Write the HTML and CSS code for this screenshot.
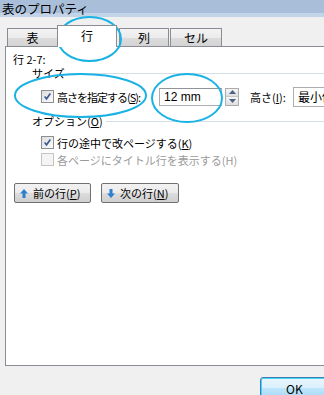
FILE: index.html
```html
<!DOCTYPE html>
<html lang="ja">
<head>
    <meta charset="UTF-8">
    <title>表のプロパティ</title>
    <link rel="stylesheet" href="styles.css">
</head>
<body>
    <div class="titlebar">表のプロパティ</div>

    <div class="tabs">
        <div class="tab tab-table">表</div>
        <div class="tab tab-row selected">行</div>
        <div class="tab tab-col">列</div>
        <div class="tab tab-cell">セル</div>
    </div>

    <div class="panel">
        <div class="range">行 2-7:</div>

        <div class="group"><span>サイズ</span></div>
        <div class="size-row">
            <div class="check">
                <span class="box checked">
                    <svg viewBox="0 0 11 11"><path d="M2 5.5 L4.3 8.3 L9 1.8" fill="none" stroke="#3d5a94" stroke-width="2"/></svg>
                </span>
                <span>高さを指定する(<u>S</u>):</span>
            </div>
            <div class="field">12 mm</div>
            <div class="spin">
                <span class="spin-btn"><svg viewBox="0 0 7 4"><path d="M0 4 L3.5 0 L7 4 Z" fill="#4d6185"/></svg></span>
                <span class="spin-btn"><svg viewBox="0 0 7 4"><path d="M0 0 L3.5 4 L7 0 Z" fill="#4d6185"/></svg></span>
            </div>
            <span class="lbl">高さ(<u>I</u>):</span>
            <div class="select">最小値</div>
        </div>

        <div class="group"><span>オプション(<u>O</u>)</span></div>
        <div class="check opt">
            <span class="box checked">
                <svg viewBox="0 0 11 11"><path d="M2 5.5 L4.3 8.3 L9 1.8" fill="none" stroke="#3d5a94" stroke-width="2"/></svg>
            </span>
            <span>行の途中で改ページする(<u>K</u>)</span>
        </div>
        <div class="check opt disabled">
            <span class="box"></span>
            <span>各ページにタイトル行を表示する(H)</span>
        </div>

        <div class="nav">
            <button class="btn">
                <svg viewBox="0 0 8 9"><path d="M4 0 L8 4.5 L5.5 4.5 L5.5 9 L2.5 9 L2.5 4.5 L0 4.5 Z" fill="#2f7fd0"/></svg>
                <span>前の行(<u>P</u>)</span>
            </button>
            <button class="btn">
                <svg viewBox="0 0 8 9"><path d="M4 9 L8 4.5 L5.5 4.5 L5.5 0 L2.5 0 L2.5 4.5 L0 4.5 Z" fill="#2f7fd0"/></svg>
                <span>次の行(<u>N</u>)</span>
            </button>
        </div>
    </div>

    <div class="footer">
        <button class="ok">OK</button>
    </div>

    <!-- hand-drawn highlight marks over the dialog -->
    <svg class="marks" viewBox="0 0 324 395">
        <ellipse cx="89.5" cy="39" rx="31.5" ry="22"/>
        <ellipse cx="80.5" cy="95.5" rx="65.5" ry="21.5"/>
        <ellipse cx="187" cy="98" rx="35" ry="24"/>
    </svg>
</body>
</html>
```

FILE: styles.css
```css
html, body {
    margin: 0;
    padding: 0;
}

body {
    position: relative;
    width: 324px;
    height: 395px;
    overflow: hidden;
    background: #f0f0f0;
    font-family: "Noto Sans CJK JP", "Noto Sans", sans-serif;
    font-size: 11px;
    color: #000;
}

u {
    text-decoration: underline;
    text-underline-offset: 1px;
}

.titlebar {
    height: 17px;
    padding-left: 2px;
    background: linear-gradient(#a9bfd9 0, #a9bfd9 13px, #c3d4e8 13px, #c3d4e8 17px);
    font-size: 12.5px;
    line-height: 17px;
}

/* tabs */
.tabs {
    display: flex;
    align-items: flex-end;
    height: 29px;
    padding-left: 7px;
    box-sizing: border-box;
}

.tab {
    height: 18px;
    box-sizing: border-box;
    border: 1px solid #898c95;
    border-bottom: none;
    background: linear-gradient(#f3f3f3 0, #ebebeb 50%, #dcdcdc 51%, #d4d4d4 100%);
    text-align: center;
    font-size: 12px;
    line-height: 17px;
}

.tab-table { width: 51px; }
.tab-col { width: 50px; margin-left: 2px; }
.tab-cell { width: 52px; margin-left: 1px; }

.tab.selected {
    width: 60px;
    height: 22px;
    margin-left: -1px;
    margin-bottom: -1px;
    position: relative;
    z-index: 1;
    background: #fff;
    line-height: 20px;
}

/* panel */
.panel {
    margin-left: 5px;
    width: 340px;
    height: 320px;
    box-sizing: border-box;
    border: 1px solid #898c95;
    background: #fff;
    padding: 5px 0 0 7px;
}

.range {
    line-height: 14px;
}

.group {
    display: flex;
    align-items: center;
    margin-left: 19px;
    line-height: 14px;
}

.group::after {
    content: "";
    flex: 1;
    height: 1px;
    margin-left: 3px;
    margin-top: 1px;
    background: #d5dfe5;
}

.size-row {
    display: flex;
    align-items: center;
    height: 19px;
    margin: 7px 0 8px 28px;
}

.check {
    display: flex;
    align-items: center;
    gap: 3px;
    white-space: nowrap;
}

.size-row .check {
    flex: none;
    width: 118px;
    letter-spacing: -1px;
}

.check.opt {
    height: 17px;
    margin-left: 28px;
}

.group + .check.opt {
    margin-top: 6px;
}

.check.disabled {
    color: #9a9a9a;
}

.box {
    width: 13px;
    height: 13px;
    flex: none;
    box-sizing: border-box;
    border: 1px solid #8e8f8f;
    background: linear-gradient(135deg, #dedede, #fbfbfb);
    display: flex;
    align-items: center;
    justify-content: center;
}

.box svg {
    width: 9px;
    height: 9px;
}

.disabled .box {
    border-color: #c4c4c4;
    background: #f4f4f4;
}

.field {
    width: 63px;
    height: 18px;
    flex: none;
    box-sizing: border-box;
    border: 1px solid #abadb3;
    border-top-color: #8f939a;
    padding-left: 4px;
    font-family: "Liberation Sans", sans-serif;
    font-size: 12px;
    line-height: 16px;
}

.spin {
    display: flex;
    flex-direction: column;
    flex: none;
    width: 14px;
    height: 18px;
    margin-left: 3px;
    box-sizing: border-box;
    border: 1px solid #acacac;
}

.spin-btn {
    flex: 1;
    display: flex;
    align-items: center;
    justify-content: center;
    background: linear-gradient(#f6f6f6, #dedede);
}

.spin-btn + .spin-btn {
    border-top: 1px solid #c8c8c8;
}

.spin-btn svg {
    width: 7px;
    height: 4px;
}

.lbl {
    width: 43px;
    flex: none;
    margin-left: 11px;
    white-space: nowrap;
}

.select {
    width: 60px;
    height: 20px;
    flex: none;
    box-sizing: border-box;
    border: 1px solid #abadb3;
    padding-left: 4px;
    font-size: 12px;
    line-height: 18px;
    white-space: nowrap;
}

/* previous / next buttons */
.nav {
    display: flex;
    gap: 10px;
    margin: 15px 0 0 1px;
}

.btn {
    display: flex;
    align-items: center;
    gap: 5px;
    height: 20px;
    padding: 0 0 0 5px;
    box-sizing: border-box;
    border: 1px solid #707070;
    border-radius: 2px;
    background: linear-gradient(#f2f2f2 0, #ebebeb 50%, #dddddd 51%, #cfcfcf 100%);
    font-family: inherit;
    font-size: 11px;
    color: #000;
}

.btn:first-child { width: 77px; }
.btn:last-child { width: 78px; }

.btn svg {
    width: 8px;
    height: 9px;
}

.footer {
    padding: 11px 0 0 260px;
}

.ok {
    width: 90px;
    height: 22px;
    border: 1px solid #3c7fb1;
    border-radius: 3px;
    box-shadow: inset 0 0 0 1px #48d2f8;
    background: linear-gradient(#eaf6fd 0, #d9f0fc 50%, #bee6fd 51%, #a7d9f5 100%);
    font-family: inherit;
    font-size: 12px;
    padding: 0;
    text-align: left;
    text-indent: 25px;
}

.marks {
    position: absolute;
    left: 0;
    top: 0;
    width: 324px;
    height: 395px;
    pointer-events: none;
}

.marks ellipse {
    fill: none;
    stroke: #19b2e4;
    stroke-width: 2;
}
```
